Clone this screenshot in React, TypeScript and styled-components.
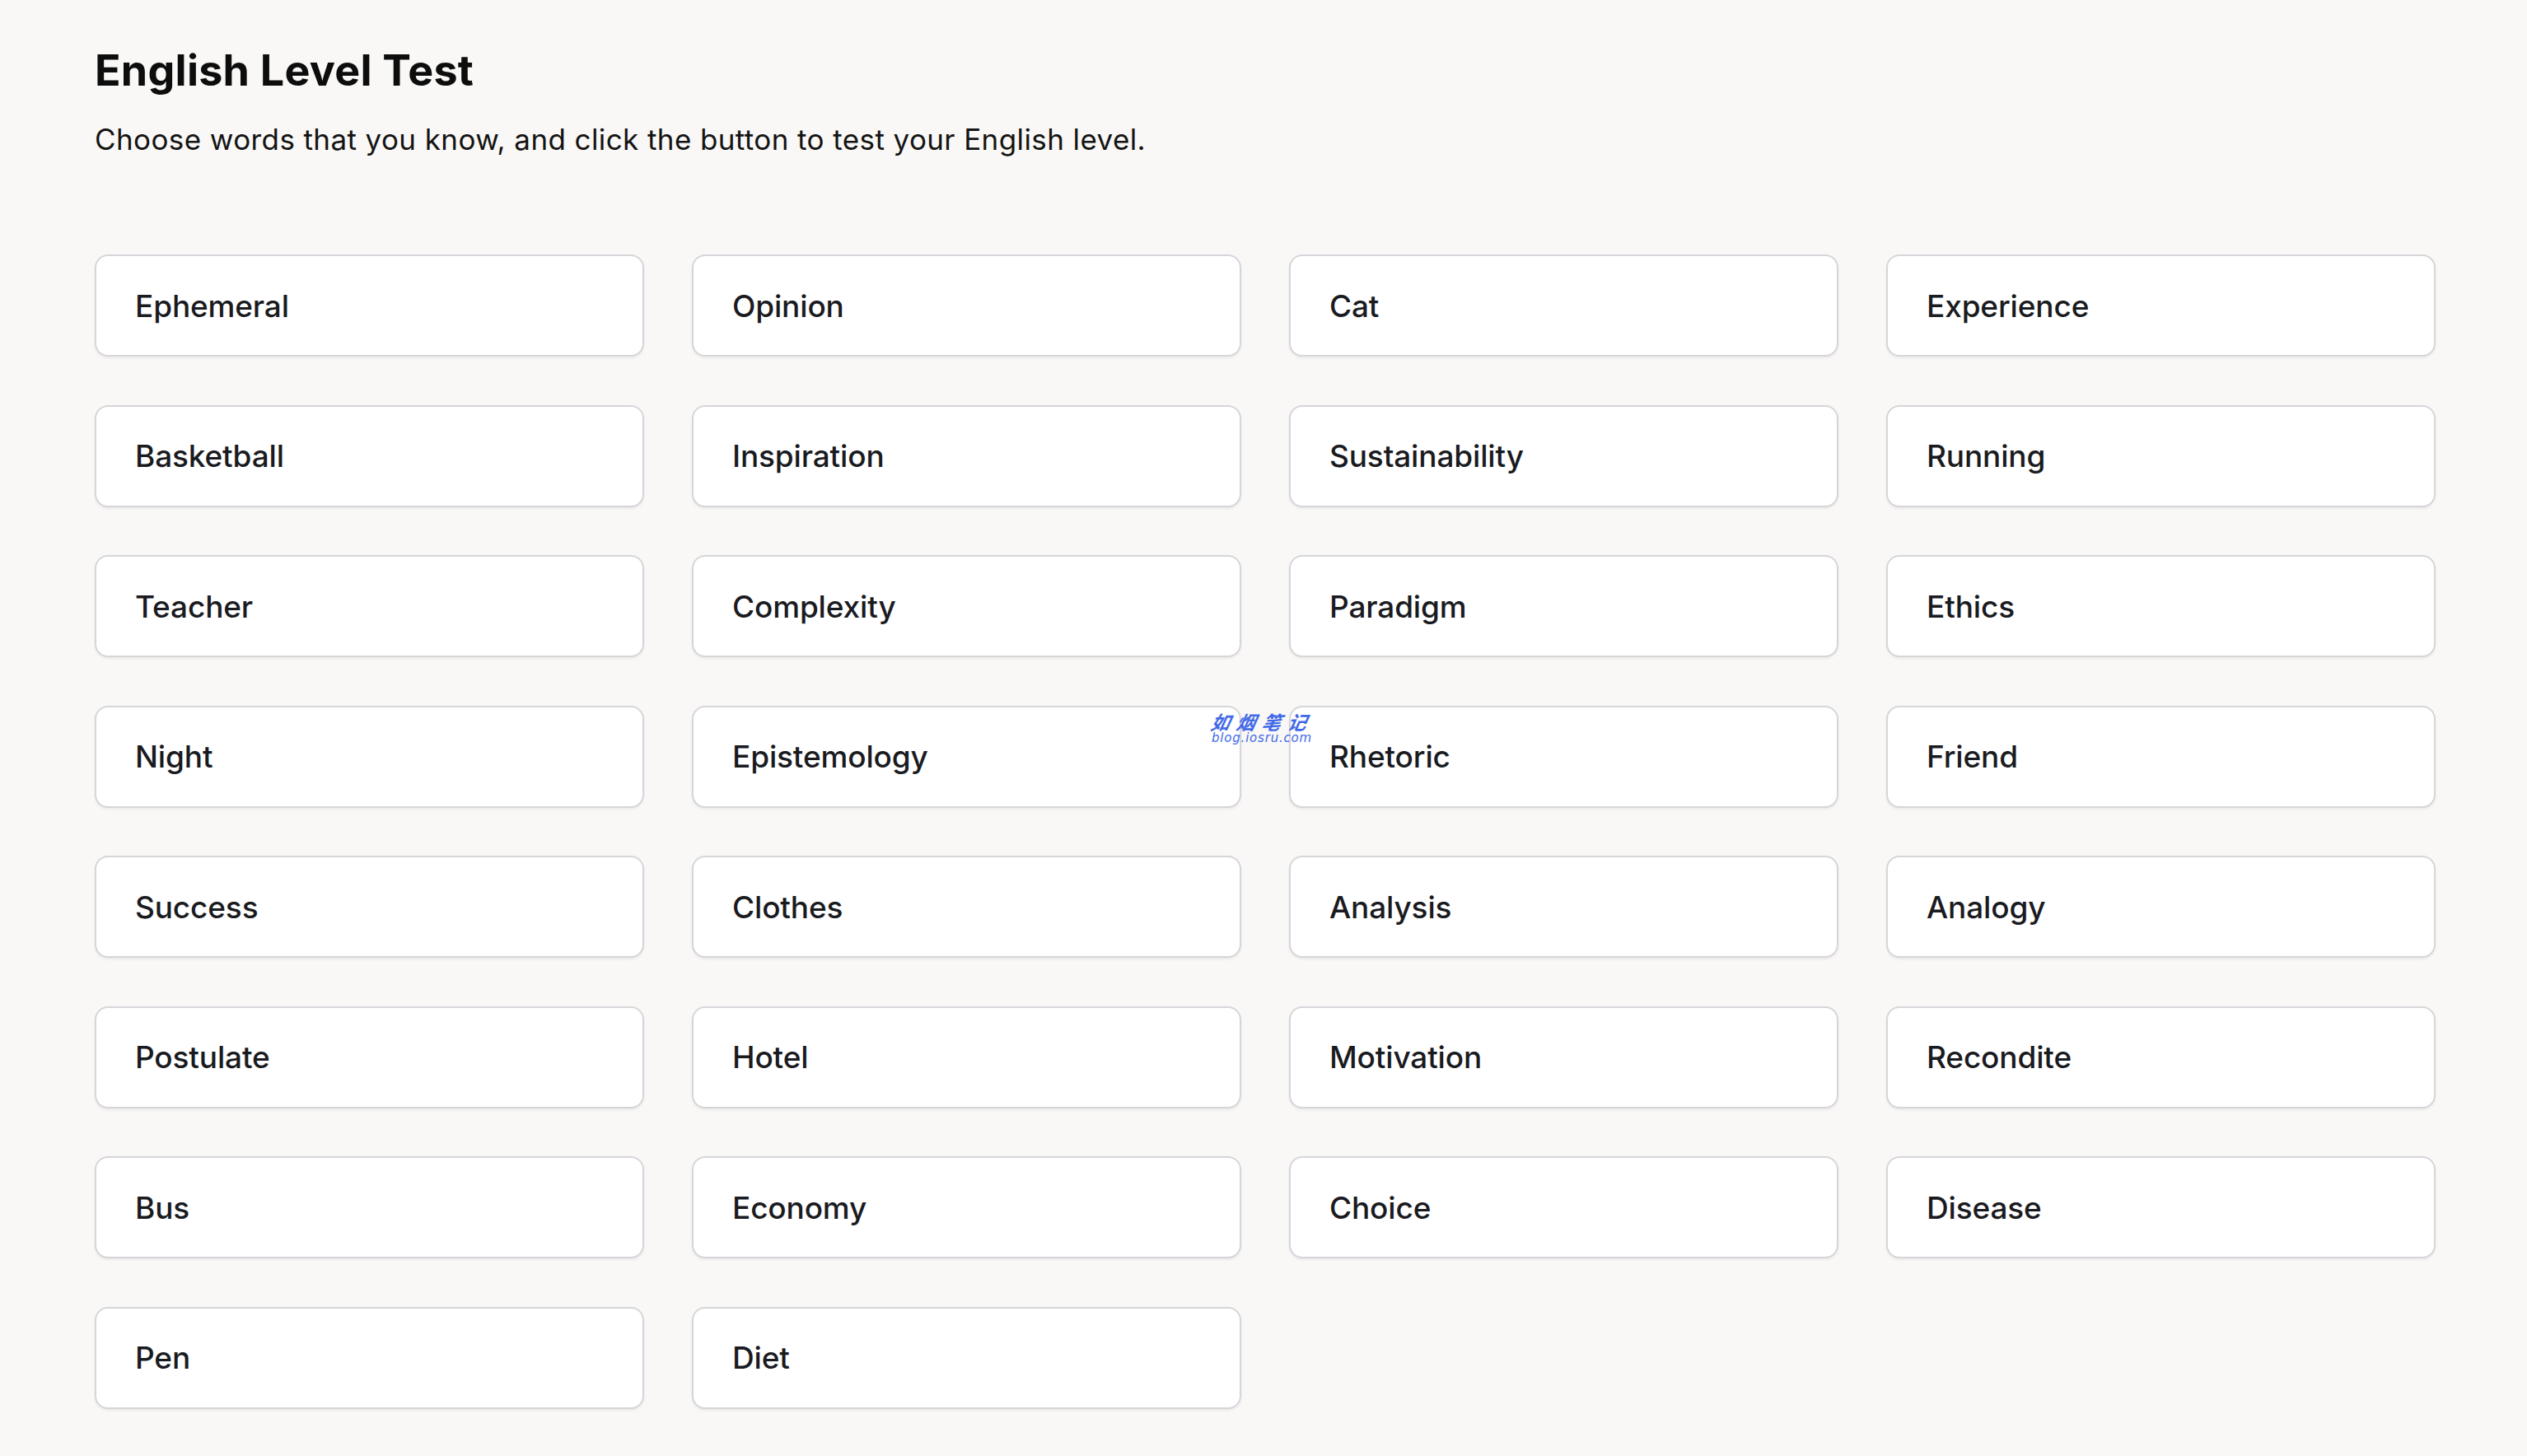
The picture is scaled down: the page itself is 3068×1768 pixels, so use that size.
import React from "react";
import styled, { createGlobalStyle } from "styled-components";

const GlobalStyle = createGlobalStyle`
  html, body {
    margin: 0;
    padding: 0;
    background: #f9f8f6;
  }
  body {
    font-family: Inter, "Noto Sans", "Liberation Sans", sans-serif;
    color: #111111;
  }
`;

const Page = styled.main`
  position: relative;
  min-height: 1768px;
  box-sizing: border-box;
  padding: 54px 111px 80px 115px;
`;

const Title = styled.h1`
  margin: 0;
  font-size: 52px;
  line-height: 64px;
  font-weight: 700;
  color: #0d0d0d;
  letter-spacing: 0.25px;
`;

const Subtitle = styled.p`
  margin: 27px 0 0;
  font-size: 35px;
  line-height: 48px;
  font-weight: 400;
  color: #141414;
  letter-spacing: 0.4px;
`;

const Grid = styled.div`
  margin-top: 116px;
  display: grid;
  grid-template-columns: repeat(4, 1fr);
  column-gap: 58px;
  row-gap: 58.5px;
`;

const WordCard = styled.button`
  height: 124px;
  box-sizing: border-box;
  display: flex;
  align-items: center;
  padding: 0 47px;
  background: #ffffff;
  border: 2px solid #d6d6da;
  border-radius: 16px;
  box-shadow: 0 2px 3px rgba(0, 0, 0, 0.06);
  font-family: Inter, "Noto Sans", "Liberation Sans", sans-serif;
  font-size: 37px;
  font-weight: 500;
  letter-spacing: -0.15px;
  color: #1a1b1f;
  text-align: left;
  cursor: pointer;
`;

const Watermark = styled.div`
  position: absolute;
  left: 1471px;
  top: 863px;
  display: flex;
  flex-direction: column;
  align-items: flex-start;
  color: #4169e8;
  font-style: italic;
  pointer-events: none;
`;

const WatermarkCn = styled.span`
  display: inline-block;
  font-family: "Noto Sans CJK SC", sans-serif;
  font-size: 23px;
  line-height: 26px;
  font-weight: 700;
  letter-spacing: 8px;
  transform: skewX(-12deg);
`;

const WatermarkUrl = styled.span`
  font-family: "DejaVu Sans", sans-serif;
  font-size: 15px;
  line-height: 14px;
  letter-spacing: 0.8px;
`;

const words = [
  "Ephemeral", "Opinion", "Cat", "Experience",
  "Basketball", "Inspiration", "Sustainability", "Running",
  "Teacher", "Complexity", "Paradigm", "Ethics",
  "Night", "Epistemology", "Rhetoric", "Friend",
  "Success", "Clothes", "Analysis", "Analogy",
  "Postulate", "Hotel", "Motivation", "Recondite",
  "Bus", "Economy", "Choice", "Disease",
  "Pen", "Diet",
];

export default function App() {
  return (
    <>
      <GlobalStyle />
      <Page>
        <Title>English Level Test</Title>
        <Subtitle>
          Choose words that you know, and click the button to test your English level.
        </Subtitle>
        <Grid>
          {words.map((w) => (
            <WordCard key={w} type="button">
              {w}
            </WordCard>
          ))}
        </Grid>
        <Watermark>
          <WatermarkCn>如烟笔记</WatermarkCn>
          <WatermarkUrl>blog.iosru.com</WatermarkUrl>
        </Watermark>
      </Page>
    </>
  );
}
